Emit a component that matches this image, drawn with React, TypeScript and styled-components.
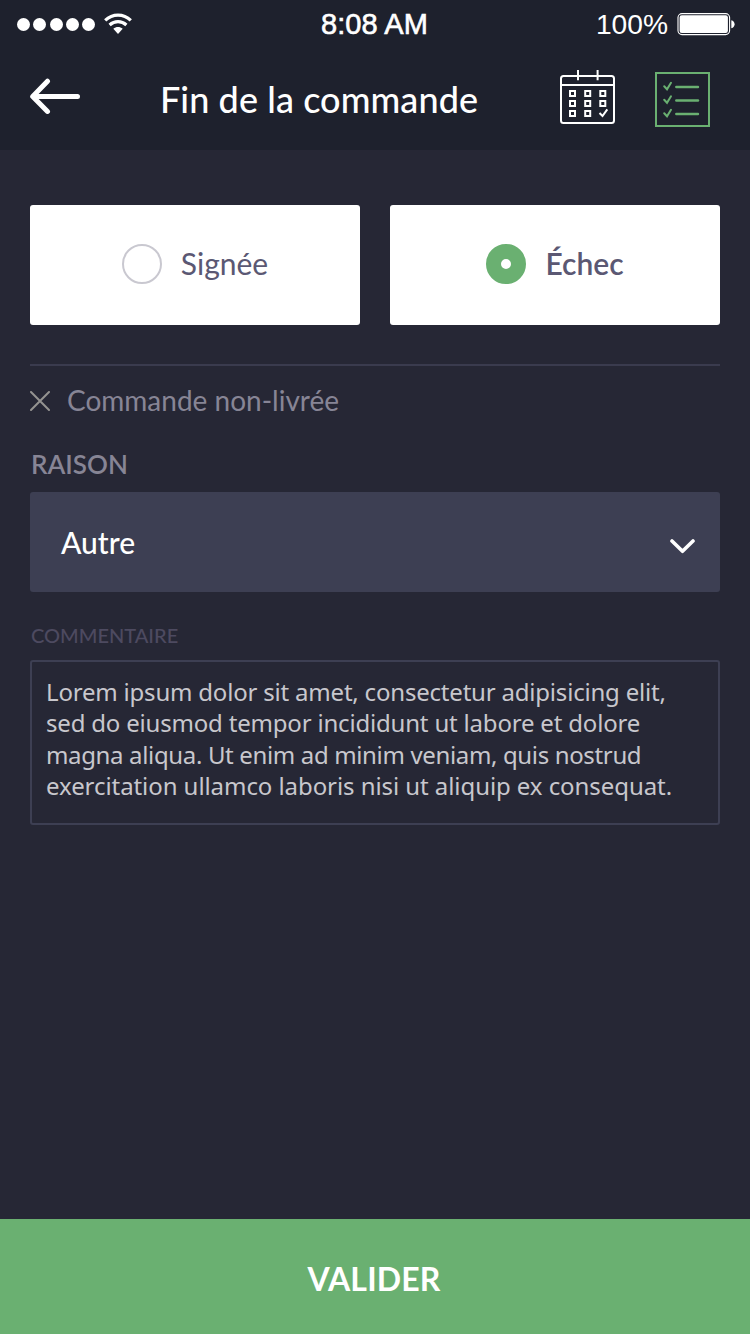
import React, { useState } from 'react';
import styled, { createGlobalStyle } from 'styled-components';

const GlobalStyle = createGlobalStyle`
  *, *::before, *::after { box-sizing: border-box; }
  html, body { margin: 0; padding: 0; background: #262735; }
  body { font-family: Lato, "Open Sans", sans-serif; }
  button { font: inherit; border: 0; padding: 0; margin: 0; background: none; }
`;

const Screen = styled.div`
  width: 750px;
  height: 1334px;
  display: flex;
  flex-direction: column;
  background: #262735;
  overflow: hidden;
`;

const Header = styled.header`
  height: 150px;
  background: #1e212d;
  flex: none;
`;

const StatusBar = styled.div`
  height: 48px;
  padding: 0 15px 0 17px;
  display: grid;
  grid-template-columns: 1fr auto 1fr;
  align-items: center;
  color: #fff;
  font-family: "Liberation Sans", Arial, sans-serif;
`;

const Signal = styled.div`
  display: flex;
  align-items: center;
  gap: 9px;
`;

const Dots = styled.div`
  display: flex;
  gap: 3.3px;
`;

const Dot = styled.span`
  width: 13px;
  height: 13px;
  border-radius: 50%;
  background: #fff;
`;

const Clock = styled.span`
  margin-right: 3px;
  font-size: 29px;
  line-height: 46px;
  letter-spacing: 0.1px;
  -webkit-text-stroke: 0.6px #fff;
`;

const Power = styled.div`
  display: flex;
  justify-content: flex-end;
  align-items: center;
  gap: 9px;
  font-size: 28.2px;
  line-height: 48px;
`;

const NavBar = styled.div`
  height: 102px;
  padding: 0 40px 0 30px;
  display: flex;
  align-items: flex-start;
`;

const IconButton = styled.button<{ $top: number; $left?: number }>`
  display: flex;
  margin-top: ${(p) => p.$top}px;
  margin-left: ${(p) => p.$left ?? 0}px;
`;

const Title = styled.h1`
  flex: 1;
  margin: 0;
  padding-left: 80px;
  font-size: 36px;
  font-weight: 500;
  line-height: 102px;
  letter-spacing: 0.08px;
  color: #fff;
  white-space: nowrap;
`;

const Content = styled.main`
  flex: 1;
  padding: 55px 30px 0;
`;

const Choices = styled.div`
  display: grid;
  grid-template-columns: 1fr 1fr;
  gap: 30px;
  padding-bottom: 39px;
  border-bottom: 2px solid #3a3b4e;
`;

const Choice = styled.button<{ $active: boolean }>`
  height: 120px;
  padding-bottom: 2px;
  border-radius: 3px;
  background: #fff;
  display: flex;
  align-items: center;
  justify-content: center;
  gap: 19px;
  font-size: 30px;
  line-height: 36px;
  font-weight: ${(p) => (p.$active ? 600 : 400)};
  color: #5b5873;
`;

const ChoiceText = styled.span`
  padding-bottom: 2px;
`;

const Radio = styled.span<{ $active: boolean }>`
  width: 40px;
  height: 40px;
  border-radius: 50%;
  border: ${(p) => (p.$active ? '15px solid #6ab071' : '2px solid #c9c8d0')};
  background: #fff;
`;

const Notice = styled.div`
  display: flex;
  align-items: center;
  gap: 17px;
  height: 68px;
  padding-top: 2px;
  font-size: 28px;
  color: #878595;
`;

const NoticeText = styled.span`
  line-height: 64px;
  padding-bottom: 2px;
`;

const Label = styled.label<{ $size: number; $height: number; $top: number; $color: string; $weight: number }>`
  display: block;
  padding-left: 1px;
  padding-top: ${(p) => p.$top}px;
  height: ${(p) => p.$height}px;
  line-height: ${(p) => p.$height - p.$top}px;
  font-size: ${(p) => p.$size}px;
  font-weight: ${(p) => p.$weight};
  color: ${(p) => p.$color};
`;

const Select = styled.button`
  width: 100%;
  height: 100px;
  padding: 0 25px 0 31px;
  display: flex;
  align-items: center;
  justify-content: space-between;
  border-radius: 3px;
  background: #3d3f53;
  color: #fff;
  font-size: 30px;
  font-weight: 500;
`;

const Chevron = styled.svg`
  margin-top: 8px;
`;

const Comment = styled.div`
  height: 165px;
  padding: 14px 14px;
  border: 2px solid #3d3f53;
  border-radius: 3px;
  font-family: "Noto Sans", "Open Sans", sans-serif;
  font-size: 24px;
  line-height: 31.4px;
  color: #c8c7cd;
`;

const CommentLine = styled.span<{ $spacing: number }>`
  display: block;
  white-space: nowrap;
  letter-spacing: ${(p) => p.$spacing}px;
`;

const Submit = styled.button`
  flex: none;
  height: 115px;
  padding-top: 4px;
  padding-right: 2px;
  background: #6ab071;
  color: #fff;
  font-size: 32px;
  font-weight: 700;
  letter-spacing: 0.15px;
`;

const WifiIcon = () => (
  <svg width="28" height="22" viewBox="0 0 28 22" fill="none" stroke="#fff">
    <path d="M1.2 7.4C8.6 .3 19.4 .3 26.8 7.4" strokeWidth="3.2" />
    <path d="M5.6 12C10.6 7.6 17.4 7.6 22.4 12" strokeWidth="3.2" />
    <path d="M9.3 15.8C12.1 13.4 15.9 13.4 18.7 15.8L14 21Z" fill="#fff" stroke="none" />
  </svg>
);

const BatteryIcon = () => (
  <svg width="58" height="24" viewBox="0 0 58 24">
    <rect x="1" y="1.6" width="51.6" height="21" rx="4" fill="none" stroke="#fff" strokeWidth="1.1" />
    <rect x="2.6" y="3.2" width="48.3" height="17.8" rx="2.2" fill="#fff" />
    <path d="M54.3 8.3C58.7 8.9 58.7 15.7 54.3 16.3Z" fill="#fff" />
  </svg>
);

const BackIcon = () => (
  <svg width="50" height="36" viewBox="0 0 50 36" fill="none" stroke="#fff" strokeWidth="5" strokeLinecap="round" strokeLinejoin="round">
    <path d="M17.5 3.2L2.7 18.4L17.5 33.4M3.5 18.4H47.5" />
  </svg>
);

const daySlots = [
  [9, 20.3], [24.2, 20.3], [39.3, 20.3],
  [9, 30.3], [24.2, 30.3], [39.3, 30.3],
  [9, 40.3], [24.2, 40.3],
];

const CalendarIcon = () => (
  <svg width="55" height="54" viewBox="0 0 55 54" fill="none" stroke="#fff" strokeWidth="2">
    <rect x="1" y="6" width="53" height="47" rx="2.5" />
    <path d="M1 15H54M18 0V10.3M37.6 0V10.3" />
    {daySlots.map(([x, y]) => (
      <rect key={`${x}-${y}`} x={x + 1} y={y + 0.7} width="5" height="5" />
    ))}
    <path d="M39.5 43L42.5 46L47.3 39.3" />
  </svg>
);

const ChecklistIcon = () => (
  <svg width="55" height="55" viewBox="0 0 55 55" fill="none" stroke="#6ab071" strokeWidth="2">
    <rect x="1" y="1" width="53" height="53" />
    {[0, 13.5, 27].map((dy) => (
      <g key={dy} transform={`translate(0 ${dy})`} strokeLinecap="round">
        <path d="M9.2 14.3L12 17.3L16 10.8" />
        <path d="M21.3 15H43" strokeWidth="2.4" />
      </g>
    ))}
  </svg>
);

const CrossIcon = () => (
  <svg width="20" height="20" viewBox="0 0 20 20" fill="none" stroke="#949391" strokeWidth="2" strokeLinecap="round">
    <path d="M1 1L19 19M19 1L1 19" />
  </svg>
);

const commentLines = [
  { text: 'Lorem ipsum dolor sit amet, consectetur adipisicing elit,', spacing: -0.2 },
  { text: 'sed do eiusmod tempor incididunt ut labore et dolore', spacing: -0.19 },
  { text: 'magna aliqua. Ut enim ad minim veniam, quis nostrud', spacing: -0.35 },
  { text: 'exercitation ullamco laboris nisi ut aliquip ex consequat.', spacing: -0.07 },
];

export default function App() {
  const [status, setStatus] = useState('Échec');

  return (
    <>
      <GlobalStyle />
      <Screen>
        <Header>
          <StatusBar>
            <Signal>
              <Dots>
                {[0, 1, 2, 3, 4].map((i) => (
                  <Dot key={i} />
                ))}
              </Dots>
              <WifiIcon />
            </Signal>
            <Clock>8:08 AM</Clock>
            <Power>
              <span>100%</span>
              <BatteryIcon />
            </Power>
          </StatusBar>
          <NavBar>
            <IconButton $top={30} aria-label="Retour">
              <BackIcon />
            </IconButton>
            <Title>Fin de la commande</Title>
            <IconButton $top={22} aria-label="Calendrier">
              <CalendarIcon />
            </IconButton>
            <IconButton $top={24} $left={40} aria-label="Liste">
              <ChecklistIcon />
            </IconButton>
          </NavBar>
        </Header>
        <Content>
          <Choices>
            {['Signée', 'Échec'].map((name) => (
              <Choice key={name} $active={status === name} onClick={() => setStatus(name)}>
                <Radio $active={status === name} />
                <ChoiceText>{name}</ChoiceText>
              </Choice>
            ))}
          </Choices>
          <Notice>
            <CrossIcon />
            <NoticeText>Commande non-livrée</NoticeText>
          </Notice>
          <Label $size={26} $height={58} $top={2} $color="#878595" $weight={600}>RAISON</Label>
          <Select>
            <span>Autre</span>
            <Chevron width="25" height="15" viewBox="0 0 25 15" fill="none" stroke="#fff" strokeWidth="3.6" strokeLinecap="round" strokeLinejoin="round">
              <path d="M2 2L12.5 12.3L23 2" />
            </Chevron>
          </Select>
          <Label $size={20} $height={68} $top={18} $color="#4d4a60" $weight={500}>COMMENTAIRE</Label>
          <Comment>
            {commentLines.map((line) => (
              <CommentLine key={line.text} $spacing={line.spacing}>{line.text}</CommentLine>
            ))}
          </Comment>
        </Content>
        <Submit>VALIDER</Submit>
      </Screen>
    </>
  );
}
